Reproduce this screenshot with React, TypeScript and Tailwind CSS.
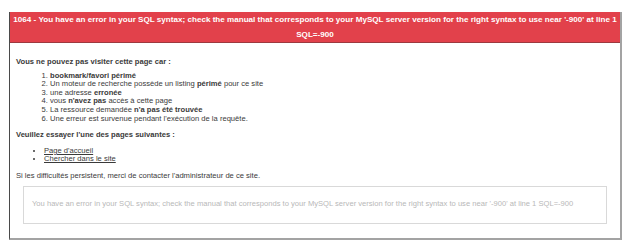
export default function App() {
  const font = { fontFamily: '"Liberation Sans", Arial, sans-serif' };
  return (
    <div className="w-[640px] h-[249px] bg-white overflow-hidden" style={font}>
      <div className="pt-[12px] pl-[9px] w-[622px]">
        <div className="border-l border-l-[#4a4a4a] border-r-2 border-r-[#a3a3a3] border-b-2 border-b-[#a3a3a3] bg-white">
          <div className="bg-[#e2414b] border-b border-b-[#9c3a3f] text-white font-bold text-[8.1px] leading-[15px] text-center whitespace-nowrap">
            1064 - You have an error in your SQL syntax; check the manual that corresponds to your MySQL server version for the right syntax to use near '-900' at line 1
            <br />
            SQL=-900
          </div>
          <div className="px-[6px] pt-[15px] pb-[14px] text-[#3a3a3a] text-[7.6px] leading-[8.6px]">
            <p className="font-bold">Vous ne pouvez pas visiter cette page car :</p>
            <ol className="list-decimal list-outside pl-[34px] mt-[5px]">
              <li>
                <b>bookmark/favori périmé</b>
              </li>
              <li>
                Un moteur de recherche possède un listing <b>périmé</b> pour ce site
              </li>
              <li>
                une adresse <b>erronée</b>
              </li>
              <li>
                vous <b>n'avez pas</b> accès à cette page
              </li>
              <li>
                La ressource demandée <b>n'a pas été trouvée</b>
              </li>
              <li>Une erreur est survenue pendant l'exécution de la requête.</li>
            </ol>
            <p className="font-bold mt-[8px]">Veuillez essayer l'une des pages suivantes :</p>
            <ul className="list-disc list-outside pl-[28px] mt-[7px]">
              <li>
                <a className="underline text-[#3a3a3a]">Page d'accueil</a>
              </li>
              <li>
                <a className="underline text-[#3a3a3a]">Chercher dans le site</a>
              </li>
            </ul>
            <p className="mt-[8px]">Si les difficultés persistent, merci de contacter l'administrateur de ce site.</p>
            <div className="mx-[7px] mt-[5px] h-[38px] border border-[#d9d9d9] flex items-center pl-[8px] text-[#b8b8b8]">
              You have an error in your SQL syntax; check the manual that corresponds to your MySQL server version for the right syntax to use near '-900' at line 1 SQL=-900
            </div>
          </div>
        </div>
      </div>
    </div>
  );
}
